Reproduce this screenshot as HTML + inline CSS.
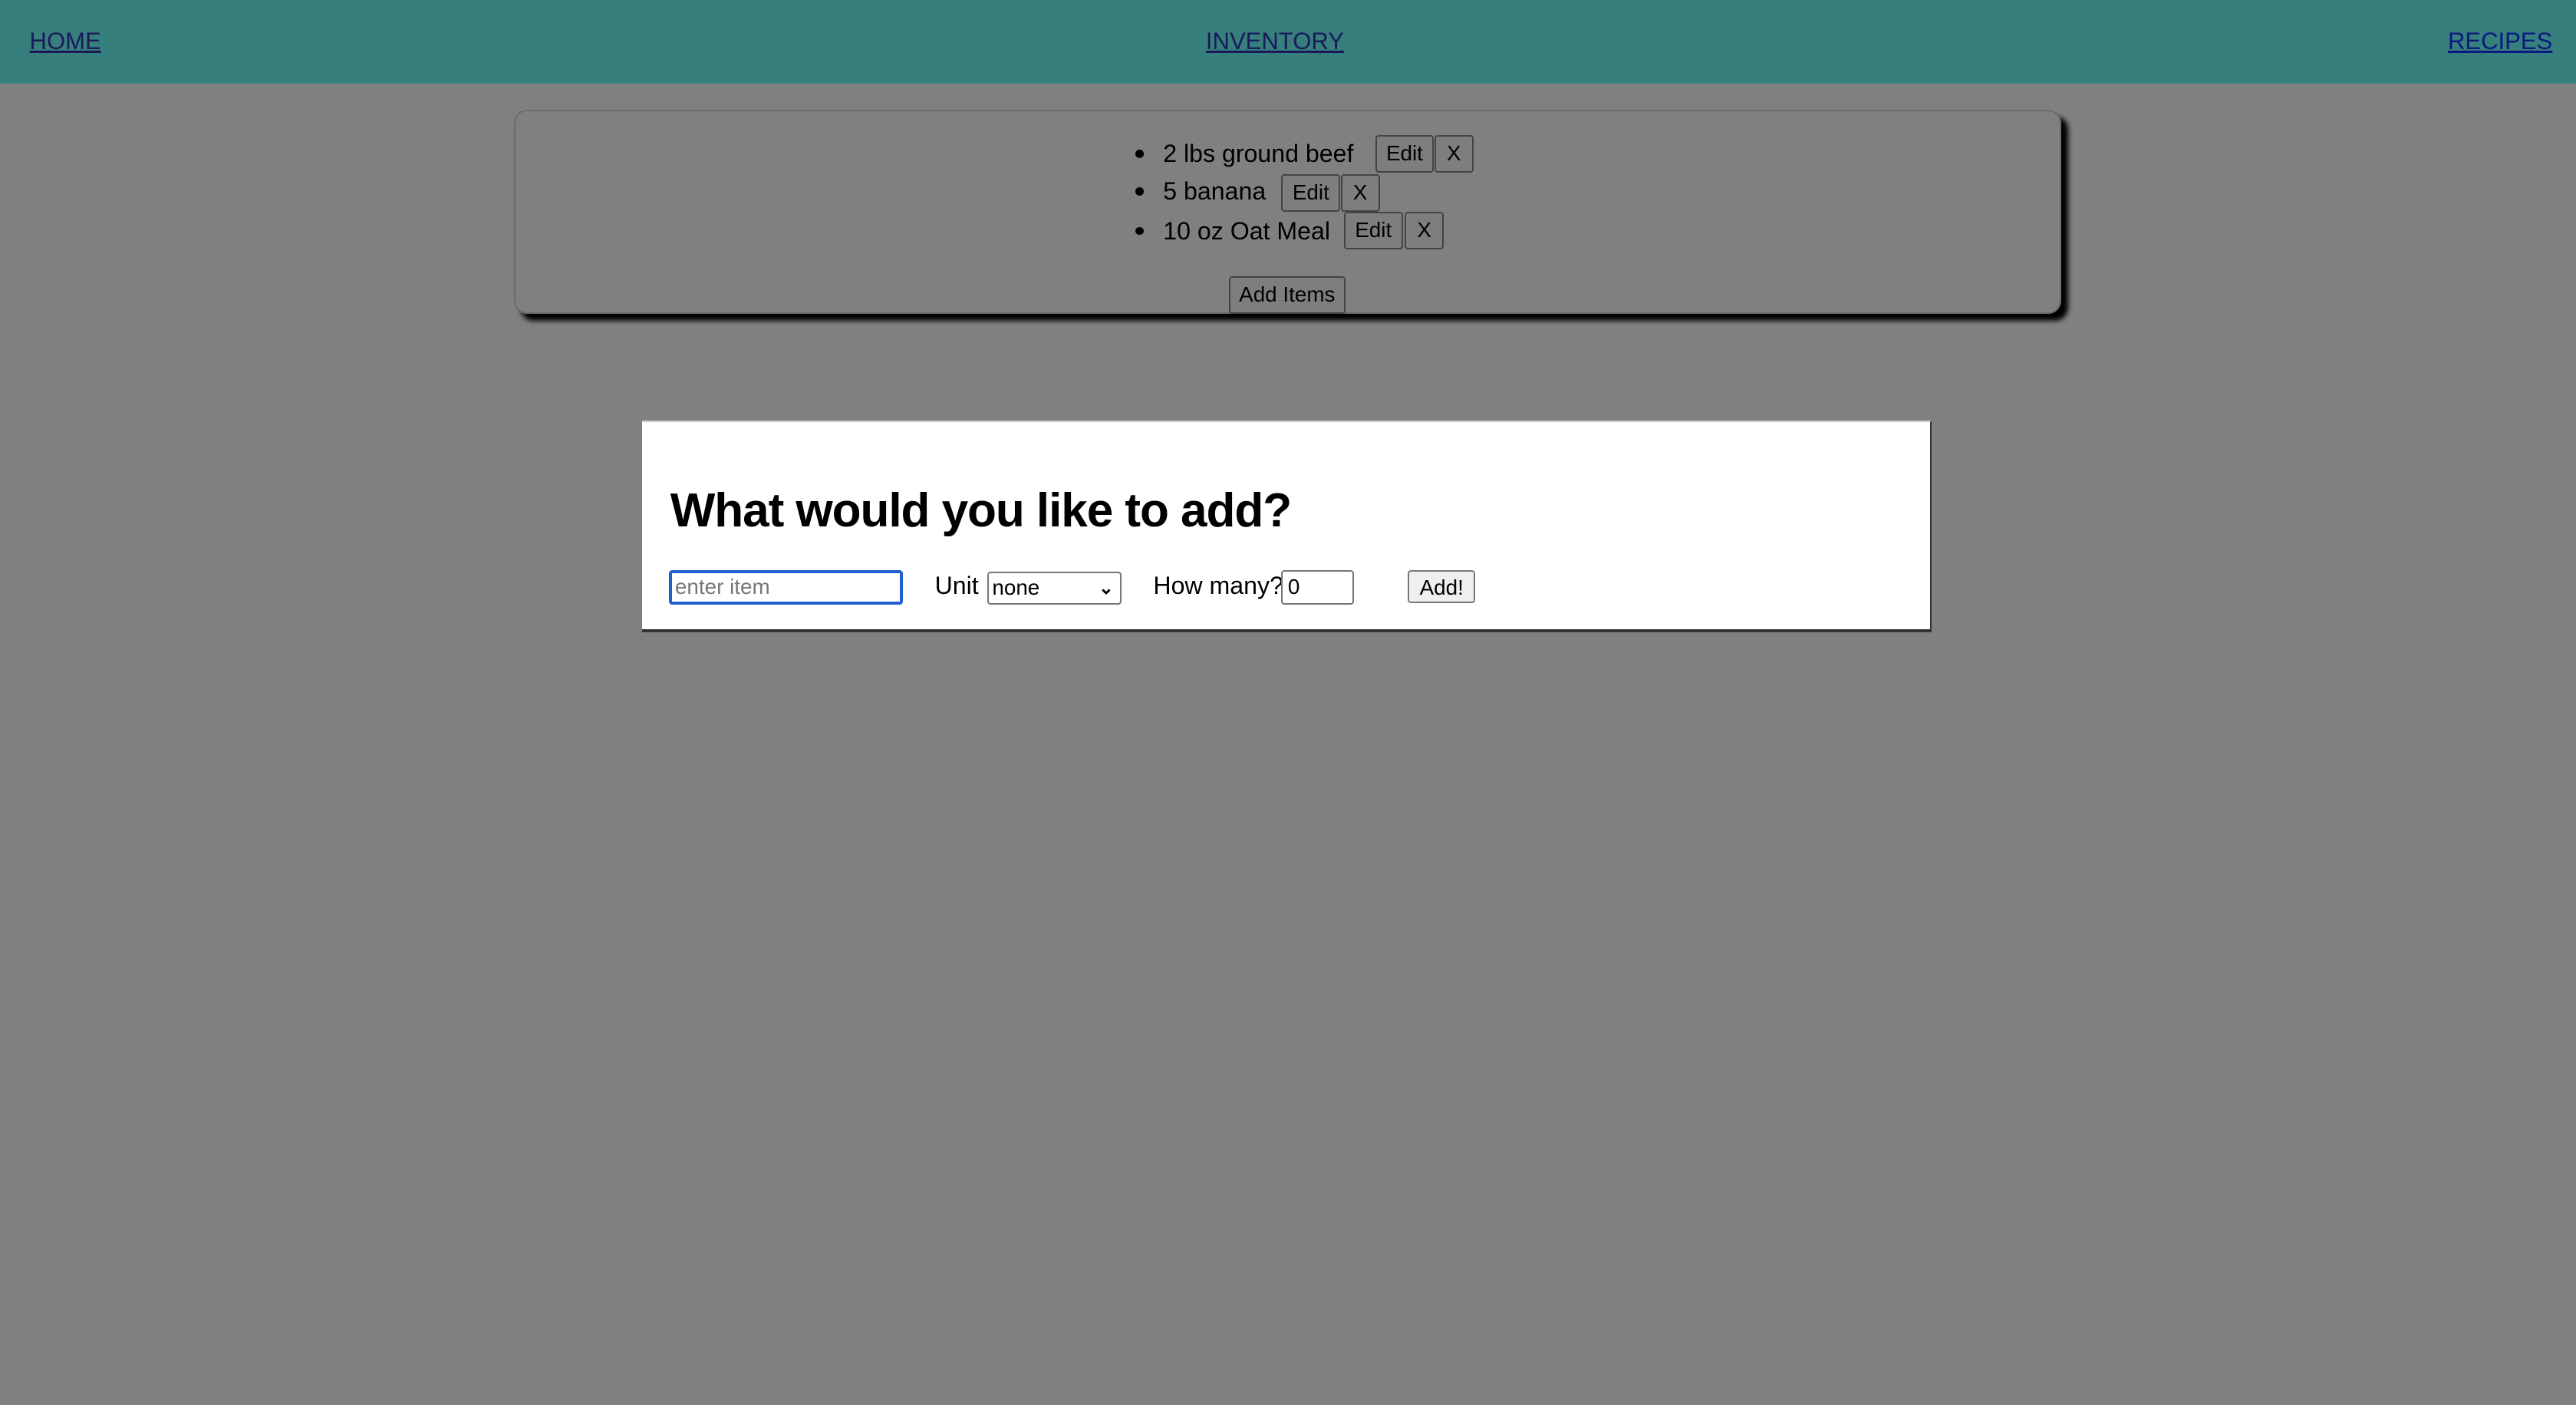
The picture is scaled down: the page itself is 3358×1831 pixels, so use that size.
<!DOCTYPE html>
<html><head><meta charset="utf-8"><style>
html,body{margin:0;padding:0;}
body{width:3358px;height:1830px;background:#808080;overflow:hidden;font-family:"Liberation Sans",Arial,sans-serif;}
#z{zoom:2.1416;width:1568px;height:855px;position:relative;}
.hdr{position:absolute;left:0;top:0;width:1568px;height:51px;background:#367f7c;}
.hdr a{position:absolute;top:17px;font-size:14.5px;color:#1a1a5a;text-decoration:underline;}
.card{position:absolute;left:313px;top:67px;width:940px;height:122px;border:1px solid #6a6a6a;border-radius:8px;box-shadow:4px 4px 3px #000;}
.ab{position:absolute;}
.t{font-size:15px;color:#000;}
.btn{position:absolute;height:21px;border:1px solid #444;border-radius:2px;font-size:13px;line-height:21px;text-align:center;color:#000;background:#7e7e7e;}
.dot{position:absolute;width:5px;height:5px;border-radius:50%;background:#000;}
.modal{position:absolute;left:391px;top:256px;width:784px;height:126px;background:#fff;border-top:1px solid #ccc;border-right:1px solid #333;border-bottom:2px solid #333;}
</style></head><body><div id="z">
<div class="hdr">
<a style="left:18px">HOME</a>
<a style="left:734px">INVENTORY</a>
<a style="left:1490px;color:#0a1a80">RECIPES</a>
</div>
<div class="card"></div>
<div class="dot" style="left:691px;top:91px"></div>
<div class="ab t" style="left:708px;top:85px">2 lbs ground beef</div>
<div class="btn" style="left:837px;top:82px;width:34px">Edit</div>
<div class="btn" style="left:873px;top:82px;width:22px">X</div>
<div class="dot" style="left:691px;top:114px"></div>
<div class="ab t" style="left:708px;top:108px">5 banana</div>
<div class="btn" style="left:780px;top:106px;width:34px">Edit</div>
<div class="btn" style="left:816px;top:106px;width:22px">X</div>
<div class="dot" style="left:691px;top:138px"></div>
<div class="ab t" style="left:708px;top:132px">10 oz Oat Meal</div>
<div class="btn" style="left:818px;top:129px;width:34px">Edit</div>
<div class="btn" style="left:855px;top:129px;width:22px">X</div>
<div class="btn" style="left:748px;top:168px;width:69px">Add Items</div>
<div class="modal"></div>
<div class="ab" style="left:408px;top:294px;font-size:29px;font-weight:bold;color:#000;letter-spacing:-0.5px">What would you like to add?</div>
<div class="ab" style="left:407px;top:347px;width:137px;height:17px;border:2px solid #1f5fd0;border-radius:2px;font-size:13px;color:#777;line-height:17px;padding-left:2px">enter item</div>
<div class="ab t" style="left:569px;top:348px">Unit</div>
<div class="ab" style="left:601px;top:348px;width:78px;height:18px;border:1px solid #767676;border-radius:2px;font-size:13px;line-height:18px;padding-left:2px;box-sizing:content-box">none<span style="position:absolute;right:4px;top:0;font-weight:bold;font-size:11px">&#8964;</span></div>
<div class="ab t" style="left:702px;top:348px">How many?</div>
<div class="ab" style="left:780px;top:347px;border:1px solid #767676;border-radius:2px;font-size:13px;line-height:19px;padding-left:3px;box-sizing:border-box;width:44px;height:21px">0</div>
<div class="ab" style="left:857px;top:347px;width:41px;height:20px;border:1px solid #767676;border-radius:2px;background:#efefef;font-size:13px;line-height:20px;text-align:center;box-sizing:border-box">Add!</div>
</div></body></html>
